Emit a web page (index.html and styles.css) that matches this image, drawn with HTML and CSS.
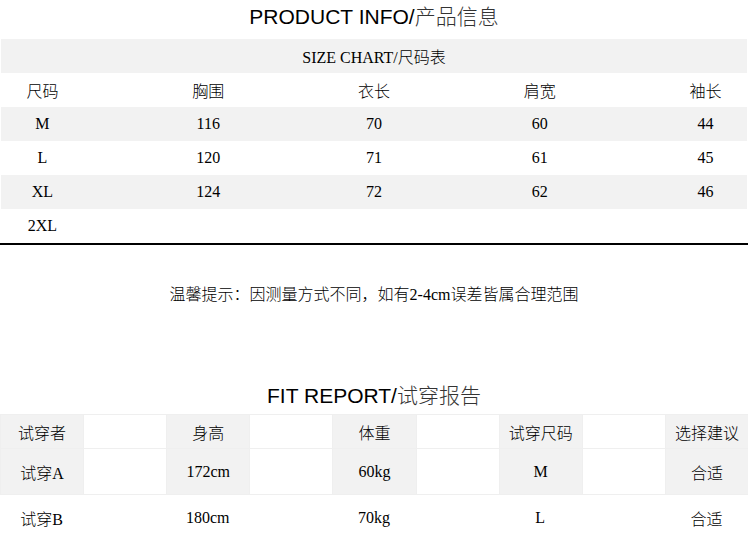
FILE: index.html
```html
<!DOCTYPE html>
<html lang="zh-CN">
<head>
<meta charset="utf-8">
<title>PRODUCT INFO</title>
<link rel="stylesheet" href="styles.css">
</head>
<body>
<div class="page">
  <h1 class="title title-top">PRODUCT INFO/<span class="cjk">产品信息</span></h1>

  <div class="size-table">
    <div class="size-row gray"><span class="full">SIZE CHART/尺码表</span></div>
    <div class="size-row"><span>尺码</span><span>胸围</span><span>衣长</span><span>肩宽</span><span>袖长</span></div>
    <div class="size-row gray"><span>M</span><span>116</span><span>70</span><span>60</span><span>44</span></div>
    <div class="size-row"><span>L</span><span>120</span><span>71</span><span>61</span><span>45</span></div>
    <div class="size-row gray"><span>XL</span><span>124</span><span>72</span><span>62</span><span>46</span></div>
    <div class="size-row"><span>2XL</span></div>
  </div>

  <p class="note">温馨提示：因测量方式不同，如有2-4cm误差皆属合理范围</p>

  <h2 class="title title-fit">FIT REPORT/<span class="cjk">试穿报告</span></h2>

  <div class="fit-grid">
    <div class="cell g">试穿者</div><div class="cell w"></div>
    <div class="cell g">身高</div><div class="cell w"></div>
    <div class="cell g">体重</div><div class="cell w"></div>
    <div class="cell g">试穿尺码</div><div class="cell w"></div>
    <div class="cell g">选择建议</div>
    <div class="cell g">试穿A</div><div class="cell w"></div>
    <div class="cell g">172cm</div><div class="cell w"></div>
    <div class="cell g">60kg</div><div class="cell w"></div>
    <div class="cell g">M</div><div class="cell w"></div>
    <div class="cell g">合适</div>
  </div>
  <div class="fit-row">
    <div class="cell">试穿B</div><div class="cell"></div>
    <div class="cell">180cm</div><div class="cell"></div>
    <div class="cell">70kg</div><div class="cell"></div>
    <div class="cell">L</div><div class="cell"></div>
    <div class="cell">合适</div>
  </div>
</div>
</body>
</html>
```

FILE: styles.css
```css
html, body {
  margin: 0;
  padding: 0;
  background: #fff;
}

.page {
  width: 748px;
  font-family: "Liberation Serif", "Noto Sans CJK SC", serif;
  font-size: 16px;
  font-weight: 300;
  color: #000;
}

.title {
  margin: 0;
  text-align: center;
  font-family: "Liberation Sans", Arial, sans-serif;
  font-weight: normal;
  font-size: 21px;
  line-height: 31px;
  color: #000;
}

.title .cjk {
  font-family: "Noto Sans CJK SC", sans-serif;
  font-weight: 300;
  color: #333;
}

.title-top {
  height: 31px;
  padding-bottom: 8px;
}

.size-table {
  border-bottom: 2px solid #000;
}

.size-row {
  display: grid;
  grid-template-columns: repeat(9, 1fr);
  height: 34px;
  align-items: center;
  margin: 0 1px;
}

.size-row.gray {
  background: #f2f2f2;
}

.size-row > span {
  text-align: center;
  white-space: nowrap;
}

.size-row > span:nth-child(2) { grid-column: 3; }
.size-row > span:nth-child(3) { grid-column: 5; }
.size-row > span:nth-child(4) { grid-column: 7; }
.size-row > span:nth-child(5) { grid-column: 9; }

.size-row > span.full {
  grid-column: 1 / -1;
}

.note {
  margin: 0;
  height: 100px;
  line-height: 100px;
  text-align: center;
}

.title-fit {
  padding-top: 34px;
  padding-bottom: 3px;
}

.fit-grid {
  display: grid;
  grid-template-columns: repeat(9, 1fr);
  grid-template-rows: 33px 45px;
  gap: 1px;
  padding: 1px 0 1px 1px;
  background: #efefef;
}

.fit-row {
  display: grid;
  grid-template-columns: repeat(9, 1fr);
  height: 46px;
}

.cell {
  display: flex;
  align-items: center;
  justify-content: center;
  white-space: nowrap;
}

.cell.g {
  background: #f2f2f2;
}

.cell.w {
  background: #fff;
}
```
